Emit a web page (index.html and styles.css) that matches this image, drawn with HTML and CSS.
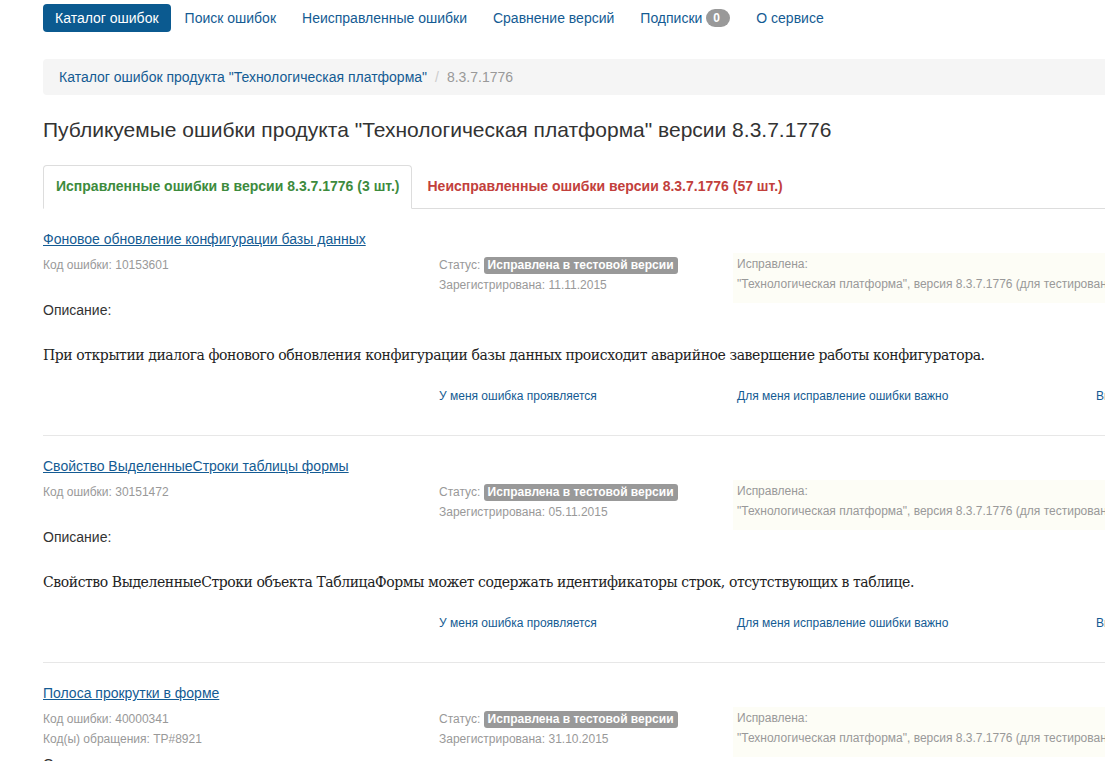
FILE: index.html
```html
<!DOCTYPE html>
<html lang="ru">
<head>
    <meta charset="UTF-8">
    <title>Публикуемые ошибки</title>
    <link rel="stylesheet" href="styles.css">
</head>
<body>
<div class="container">
    <ul class="nav-pills">
        <li class="active"><a href="#">Каталог ошибок</a></li>
        <li><a href="#">Поиск ошибок</a></li>
        <li><a href="#">Неисправленные ошибки</a></li>
        <li><a href="#">Сравнение версий</a></li>
        <li><a href="#">Подписки <span class="badge">0</span></a></li>
        <li><a href="#">О сервисе</a></li>
    </ul>

    <ol class="breadcrumb">
        <li><a href="#">Каталог ошибок продукта "Технологическая платформа"</a></li>
        <li class="current">8.3.7.1776</li>
    </ol>

    <h1>Публикуемые ошибки продукта "Технологическая платформа" версии 8.3.7.1776</h1>

    <ul class="nav-tabs">
        <li class="active"><a href="#" class="fixed">Исправленные ошибки в версии 8.3.7.1776 (3 шт.)</a></li>
        <li><a href="#" class="open">Неисправленные ошибки версии 8.3.7.1776 (57 шт.)</a></li>
    </ul>

    <div class="bug">
        <a class="bug-title" href="#">Фоновое обновление конфигурации базы данных</a>
        <div class="bug-info">
            <div>
                <div>Код ошибки: 10153601</div>
            </div>
            <div>
                <div>Статус: <span class="label">Исправлена в тестовой версии</span></div>
                <div>Зарегистрирована: 11.11.2015</div>
            </div>
            <div class="fixed-in">
                <div>Исправлена:</div>
                <div>"Технологическая платформа", версия 8.3.7.1776 (для тестирования)</div>
            </div>
        </div>
        <div class="desc-label">Описание:</div>
        <p class="desc">При открытии диалога фонового обновления конфигурации базы данных происходит аварийное завершение работы конфигуратора.</p>
        <div class="bug-actions">
            <span></span>
            <a href="#">У меня ошибка проявляется</a>
            <a href="#">Для меня исправление ошибки важно</a>
            <a href="#">Вы можете подписаться</a>
        </div>
    </div>

    <div class="bug">
        <a class="bug-title" href="#">Свойство ВыделенныеСтроки таблицы формы</a>
        <div class="bug-info">
            <div>
                <div>Код ошибки: 30151472</div>
            </div>
            <div>
                <div>Статус: <span class="label">Исправлена в тестовой версии</span></div>
                <div>Зарегистрирована: 05.11.2015</div>
            </div>
            <div class="fixed-in">
                <div>Исправлена:</div>
                <div>"Технологическая платформа", версия 8.3.7.1776 (для тестирования)</div>
            </div>
        </div>
        <div class="desc-label">Описание:</div>
        <p class="desc">Свойство ВыделенныеСтроки объекта ТаблицаФормы может содержать идентификаторы строк, отсутствующих в таблице.</p>
        <div class="bug-actions">
            <span></span>
            <a href="#">У меня ошибка проявляется</a>
            <a href="#">Для меня исправление ошибки важно</a>
            <a href="#">Вы можете подписаться</a>
        </div>
    </div>

    <div class="bug">
        <a class="bug-title" href="#">Полоса прокрутки в форме</a>
        <div class="bug-info">
            <div>
                <div>Код ошибки: 40000341</div>
                <div>Код(ы) обращения: TP#8921</div>
            </div>
            <div>
                <div>Статус: <span class="label">Исправлена в тестовой версии</span></div>
                <div>Зарегистрирована: 31.10.2015</div>
            </div>
            <div class="fixed-in">
                <div>Исправлена:</div>
                <div>"Технологическая платформа", версия 8.3.7.1776 (для тестирования)</div>
            </div>
        </div>
        <div class="desc-label">Описание:</div>
        <p class="desc">Полоса прокрутки в форме отображается некорректно.</p>
    </div>
</div>
</body>
</html>
```

FILE: styles.css
```css
body {
    font-family: "Liberation Sans", Arial, sans-serif;
    font-size: 14px;
    color: #333;
    margin: 0;
    background-color: #fff;
    overflow: hidden;
}
a {
    color: #145b93;
    text-decoration: none;
}
.container {
    width: 1170px;
    margin-left: 43px;
}
.nav-pills {
    list-style: none;
    margin: 0;
    padding: 4px 0 0;
    display: flex;
}
.nav-pills li + li {
    margin-left: 2px;
}
.nav-pills a {
    display: block;
    padding: 5px 12px;
    line-height: 18px;
    border-radius: 4px;
}
.nav-pills .active a {
    background-color: #0b5a90;
    color: white;
}
.badge {
    display: inline-block;
    background-color: #999;
    color: white;
    font-size: 12px;
    font-weight: bold;
    line-height: 18px;
    min-width: 10px;
    padding: 0 7px;
    border-radius: 9px;
    vertical-align: middle;
    margin-top: -2px;
}
.breadcrumb {
    list-style: none;
    margin: 27px 0 0;
    padding: 9px 16px;
    background-color: #f5f5f5;
    border-radius: 4px;
    display: flex;
    line-height: 18px;
}
.breadcrumb li + li::before {
    content: "/";
    color: #ccc;
    padding: 0 8px;
}
.breadcrumb .current {
    color: #999;
}
h1 {
    font-size: 21px;
    font-weight: normal;
    line-height: 26px;
    margin: 22px 0 22px;
}
.nav-tabs {
    list-style: none;
    margin: 0;
    padding: 0;
    display: flex;
    border-bottom: 1px solid #ddd;
}
.nav-tabs li {
    margin-bottom: -1px;
}
.nav-tabs li + li {
    margin-left: 2px;
}
.nav-tabs a {
    display: block;
    padding: 10px 12px 12px;
    line-height: 20px;
    font-size: 14px;
    font-weight: bold;
    border: 1px solid transparent;
    border-radius: 4px 4px 0 0;
}
.nav-tabs .active a {
    border-color: #ddd #ddd transparent;
    background-color: white;
}
.nav-tabs .fixed {
    color: #3d8b3d;
}
.nav-tabs .open {
    color: #c2403c;
}
.bug {
    padding: 21px 0 30px;
    border-bottom: 1px solid #e7e7e7;
}
.bug-title {
    display: inline-block;
    font-size: 14px;
    line-height: 19px;
    text-decoration: underline;
}
.bug-info {
    display: grid;
    grid-template-columns: 396px 294px 1fr;
    margin-top: 6px;
    font-size: 12px;
    line-height: 20px;
    color: #999;
}
.bug-info .fixed-in {
    background-color: #fdfdf6;
    padding: 1px 4px 9px;
    margin: -2px 0 -8px;
}
.label {
    display: inline-block;
    background-color: #999;
    color: white;
    font-weight: bold;
    line-height: 16px;
    padding: 0 4px 1px;
    border-radius: 3px;
}
.desc-label {
    margin-top: 5px;
    line-height: 20px;
}
.desc {
    font-family: "DejaVu Serif", Georgia, serif;
    font-size: 14px;
    letter-spacing: -0.43px;
    line-height: 20px;
    color: #222;
    margin: 25px 0 0;
}
.bug-actions {
    display: grid;
    grid-template-columns: 396px 298px 359px 1fr;
    margin-top: 22px;
    font-size: 12px;
    line-height: 18px;
    white-space: nowrap;
}
```
